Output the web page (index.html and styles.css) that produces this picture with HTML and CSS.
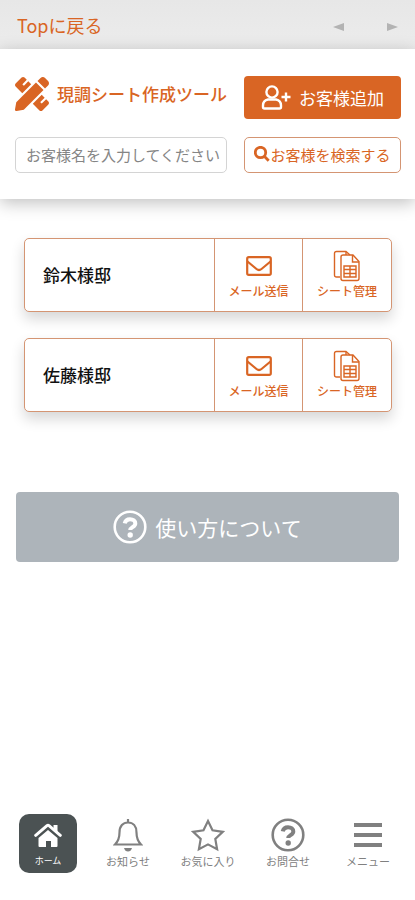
FILE: index.html
```html
<!DOCTYPE html>
<html lang="ja">
<head>
<meta charset="utf-8">
<meta name="viewport" content="width=device-width, initial-scale=1">
<title>現調シート作成ツール</title>
<link rel="stylesheet" href="styles.css">
</head>
<body>
<svg class="symbols" aria-hidden="true">
  <symbol id="mail" viewBox="0 0 26 20">
    <rect x="1.2" y="1.2" width="23.6" height="17.6" rx="1.6"/>
    <path d="M1.5 5.5 10.5 13q2.500 2 5 0L24.500 5.500"/>
  </symbol>
  <symbol id="sheets" viewBox="0 0 28 32">
    <path d="M7 27H3.500Q1.500 27 1.500 25V3.500Q1.500 1.500 3.500 1.500H13L17 5"/>
    <path d="M10 5h10l6 6.500V28.500q0 2-2 2H10q-2 0-2-2V7q0-2 2-2z"/>
    <path d="M19.500 5v7H26M11 16h12v11H11zM11 19.500h12M11 23.500h12M17 16v11M13 2v3"/>
  </symbol>
  <symbol id="question" viewBox="0 0 34 34">
    <circle cx="17" cy="17" r="15.300"/>
    <path class="hook" d="M11.700 13.400c.6-2.700 2.600-4.200 5.300-4.200 3.100 0 5.300 1.700 5.300 4.300 0 3.700-5.100 3.500-5.100 6.600"/>
    <circle class="dot" cx="17.200" cy="25" r="2.700"/>
  </symbol>
</svg>

<nav class="topbar" aria-label="ページ移動">
  <a class="back" href="#">Topに戻る</a>
  <div class="pager">
    <button type="button" aria-label="前へ"><svg width="11" height="8" viewBox="0 0 11 8"><path d="M0 4 11 0v8z"/></svg></button>
    <button type="button" aria-label="次へ"><svg width="11" height="8" viewBox="0 0 11 8"><path d="M11 4 0 0v8z"/></svg></button>
  </div>
</nav>

<header class="header">
  <h1 class="brand">
    <svg width="34" height="34" viewBox="0 0 512 512" aria-hidden="true"><path d="M109.460 244.040l134.580-134.560-44.120-44.120-61.680 61.680a7.919 7.919 0 0 1-11.210 0l-11.210-11.210c-3.100-3.100-3.100-8.120 0-11.210l61.680-61.680-33.640-33.650C131.470-3.100 111.390-3.100 99 9.290L9.290 99c-12.380 12.390-12.390 32.470 0 44.860l100.170 100.180zm388.470-116.800c18.760-18.760 18.750-49.170 0-67.930l-45.250-45.250c-18.760-18.760-49.180-18.760-67.950 0l-46.020 46.010 113.200 113.200 46.020-46.030zM316.080 82.710l-297 296.960L.320 487.110c-2.530 14.490 10.090 27.110 24.590 24.560l107.450-18.840L429.280 195.900 316.080 82.710zm186.630 285.430l-33.640-33.640-61.680 61.680c-3.100 3.100-8.120 3.100-11.210 0l-11.210-11.210c-3.090-3.100-3.090-8.120 0-11.210l61.680-61.680-44.140-44.140L267.930 402.500l100.210 100.200c12.390 12.390 32.470 12.390 44.860 0l89.710-89.700c12.390-12.390 12.390-32.470 0-44.860z"/></svg>
    <span>現調シート作成ツール</span>
  </h1>
  <button class="add" type="button">
    <svg width="30" height="25" viewBox="0 0 30 25" aria-hidden="true"><circle cx="11" cy="7" r="5.600"/><path d="M7 14.500h8q5 1 5 6v1.500q0 1.500-1.500 1.500h-15Q2 23.500 2 22v-1.500q0-5 5-6zM20.500 12h9M25 7.500v9"/></svg>
    <span>お客様追加</span>
  </button>
  <input class="query" type="text" aria-label="お客様名" placeholder="お客様名を入力してください">
  <button class="search" type="button">
    <svg width="16" height="16" viewBox="0 0 16 16" aria-hidden="true"><circle cx="6.500" cy="6.500" r="5.200"/><path d="m10.300 10.300 4.400 4.400"/></svg>
    <span>お客様を検索する</span>
  </button>
</header>

<main class="main">
  <ul class="customers">
    <li class="customer">
      <h2>鈴木様邸</h2>
      <button type="button"><svg class="line mail"><use href="#mail"/></svg><span>メール送信</span></button>
      <button type="button"><svg class="line sheets"><use href="#sheets"/></svg><span>シート管理</span></button>
    </li>
    <li class="customer">
      <h2>佐藤様邸</h2>
      <button type="button"><svg class="line mail"><use href="#mail"/></svg><span>メール送信</span></button>
      <button type="button"><svg class="line sheets"><use href="#sheets"/></svg><span>シート管理</span></button>
    </li>
  </ul>
  <button class="help" type="button">
    <svg class="question"><use href="#question"/></svg>
    <span>使い方について</span>
  </button>
</main>

<nav class="tabs" aria-label="メイン">
  <a class="tab current" href="#" aria-current="page">
    <svg width="28" height="34" viewBox="0 0 28 34" aria-hidden="true"><path d="M14 12 23.500 20v8q0 1-1 1H17v-6h-5v6H5.500q-1 0-1-1v-8z"/><path d="M19.500 7h4v8l-4-4z"/><path class="roof" d="M1.700 17.300 13 7.700q1-.8 2 0l11.300 9.600"/></svg>
    <span>ホーム</span>
  </a>
  <a class="tab" href="#">
    <svg class="outline" width="30" height="34" viewBox="0 0 30 34" aria-hidden="true"><path d="M15 1v3M2 26.500c3.500-3.500 4.500-7 4.500-12C6.500 8 10 4.500 15 4.500s8.500 3.500 8.500 10c0 5 1 8.500 4.500 12z"/><path class="solid" d="M11 30h8q-1 3.500-4 3.500T11 30z"/></svg>
    <span>お知らせ</span>
  </a>
  <a class="tab" href="#">
    <svg class="outline" width="34" height="34" viewBox="0 0 34 34" aria-hidden="true"><path d="m17 3 4.500 9.300 10.300 1.500-7.500 7.200 1.800 10.200L17 26.400l-9.100 4.800L9.700 21l-7.500-7.200 10.300-1.500z"/></svg>
    <span>お気に入り</span>
  </a>
  <a class="tab" href="#">
    <svg class="question"><use href="#question"/></svg>
    <span>お問合せ</span>
  </a>
  <a class="tab" href="#">
    <svg width="28" height="34" viewBox="0 0 28 34" aria-hidden="true"><path d="M0 5h28v4H0zM0 15h28v4H0zM0 25h28v4H0z"/></svg>
    <span>メニュー</span>
  </a>
</nav>
</body>
</html>
```
FILE: styles.css
```css
:root {
  --orange: #d96524;
  --edge: #d49573;
  --gray: #808080;
}

* {
  box-sizing: border-box;
}

body {
  margin: 0;
  min-height: 100vh;
  display: flex;
  flex-direction: column;
  background: #fff;
  font-family: "Noto Sans CJK JP", sans-serif;
  line-height: 1;
}

button {
  margin: 0;
  padding: 0;
  border: 0;
  background: none;
  color: inherit;
  font: inherit;
  cursor: pointer;
}

a {
  color: inherit;
  text-decoration: none;
}

svg {
  display: block;
  flex: none;
  fill: currentColor;
}

span {
  white-space: nowrap;
}

.symbols {
  position: absolute;
  width: 0;
  height: 0;
}

.topbar {
  display: flex;
  align-items: center;
  justify-content: space-between;
  height: 49px;
  padding: 0 17px;
  background: linear-gradient(#e7e7e7, #ececec);
}

.back {
  color: var(--orange);
  font-size: 18px;
}

.pager {
  display: flex;
  gap: 43px;
  padding-top: 4px;
  color: #b3b3b3;
}

.header {
  display: grid;
  grid-template-columns: minmax(0, 212fr) minmax(0, 157fr);
  column-gap: 17px;
  row-gap: 18px;
  align-items: center;
  padding: 27px 14px 26px 15px;
  box-shadow: 0 4px 16px rgba(0, 0, 0, 0.25);
}

.brand {
  display: flex;
  align-items: center;
  gap: 8px;
  margin: 0;
  padding-bottom: 8px;
  color: var(--orange);
  font-size: 17px;
  font-weight: 500;
}

.add {
  display: flex;
  align-items: center;
  justify-content: center;
  gap: 8px;
  height: 43px;
  border-radius: 4px;
  background: var(--orange);
  color: #fff;
  font-size: 17px;
}

.add svg {
  fill: none;
  stroke: currentColor;
  stroke-width: 2.4;
}

.query,
.search {
  width: 100%;
  height: 36px;
  border: 1px solid #d4d4d4;
  border-radius: 5px;
  background: #fff;
  font-size: 15px;
}

.query {
  padding: 0 4px 2px 10px;
  color: #444;
  font-family: inherit;
}

.query::placeholder {
  color: #858585;
  opacity: 1;
}

.search {
  display: flex;
  align-items: center;
  justify-content: center;
  padding-bottom: 2px;
  border-color: var(--edge);
  color: var(--orange);
}

.search svg {
  fill: none;
  stroke: currentColor;
  stroke-width: 2.8;
}

.main {
  padding: 39px 16px;
}

.customers {
  display: grid;
  gap: 26px;
  margin: 0 7px 80px 8px;
  padding: 0;
  list-style: none;
}

.customer {
  display: grid;
  grid-template-columns: minmax(0, 1fr) 88px 89px;
  height: 74px;
  border: 1px solid var(--edge);
  border-radius: 5px;
  background: #fff;
  box-shadow: 0 7px 14px rgba(0, 0, 0, 0.16);
}

.customer h2 {
  align-self: center;
  margin: 0;
  padding: 0 0 2px 18px;
  color: #111;
  font-size: 17px;
  font-weight: 500;
}

.customer button {
  display: grid;
  grid-template-rows: 32px 12px;
  gap: 3px;
  align-content: center;
  place-items: center;
  padding-bottom: 4px;
  border-left: 1px solid var(--edge);
  color: var(--orange);
  font-size: 12px;
  font-weight: 500;
}

.line {
  fill: none;
  stroke: currentColor;
}

.mail {
  width: 26px;
  height: 20px;
  stroke-width: 2.2;
}

.sheets {
  width: 28px;
  height: 32px;
  stroke-width: 1.4;
}

.help {
  display: flex;
  align-items: center;
  justify-content: center;
  gap: 8px;
  width: 100%;
  height: 70px;
  border-radius: 4px;
  background: #adb4ba;
  color: #fff;
  font-size: 21px;
}

.question {
  width: 34px;
  height: 34px;
  fill: none;
  stroke: currentColor;
  stroke-width: 2.6;
}

.hook {
  stroke-width: 4;
}

.dot,
.solid {
  fill: currentColor;
  stroke: none;
}

.tabs {
  display: grid;
  grid-template-columns: repeat(5, minmax(0, 1fr));
  justify-items: center;
  margin-top: auto;
  padding: 0 7px 27px 8px;
}

.tab {
  display: flex;
  flex-direction: column;
  align-items: center;
  gap: 4px;
  width: 58px;
  height: 59px;
  padding-top: 4px;
  color: var(--gray);
  font-size: 11px;
}

.outline {
  fill: none;
  stroke: currentColor;
  stroke-width: 2.2;
}

.current {
  border-radius: 10px;
  background: #4b5253;
  color: #fff;
  font-size: 9px;
}

.roof {
  fill: none;
  stroke: currentColor;
  stroke-width: 3;
  stroke-linecap: round;
}
```
